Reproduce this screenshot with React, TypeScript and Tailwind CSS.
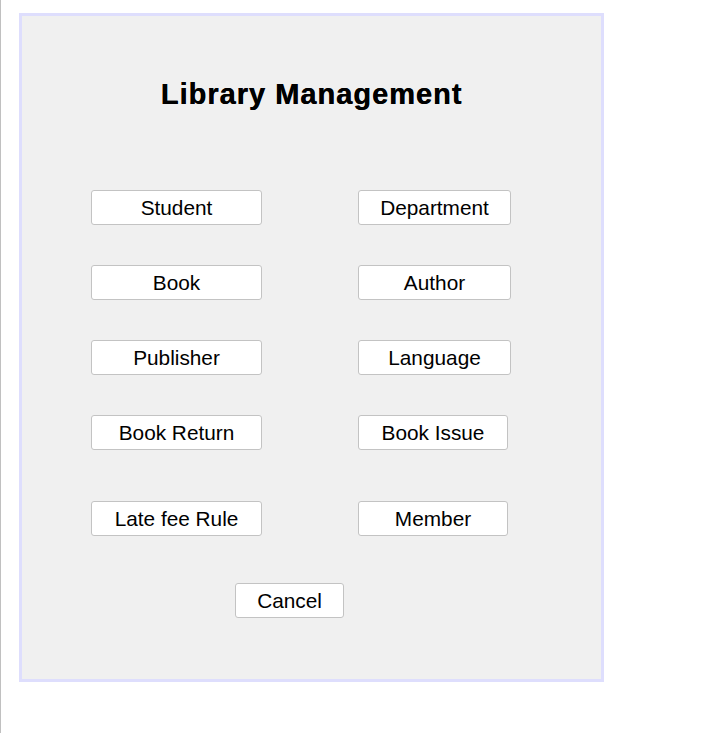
const rows = [
  { left: 'Student', right: 'Department', rightW: 'w-[153px]', mt: 'mt-[81px]' },
  { left: 'Book', right: 'Author', rightW: 'w-[153px]', mt: 'mt-[40px]' },
  { left: 'Publisher', right: 'Language', rightW: 'w-[153px]', mt: 'mt-[40px]' },
  { left: 'Book Return', right: 'Book Issue', rightW: 'w-[150px]', mt: 'mt-[40px]' },
  { left: 'Late fee Rule', right: 'Member', rightW: 'w-[150px]', mt: 'mt-[51px]' },
];

function Btn({ label, width }: { label: string; width: string }) {
  return (
    <button
      type="button"
      className={`${width} h-[35px] pt-[2px] flex items-center justify-center bg-white border border-[#c3c3c3] rounded-[3px] text-[20.8px] leading-none text-black`}
    >
      {label}
    </button>
  );
}

export default function App() {
  return (
    <div
      className="min-h-[733px] border-l border-[#c0c0c0] pl-[18px] pt-[13px] bg-white"
      style={{ fontFamily: '"Liberation Sans", Arial, sans-serif' }}
    >
      <div className="w-[585px] h-[669px] border-[3px] border-[#dedefd] bg-[#f0f0f0] flex flex-col">
        <h1 className="mt-[64px] text-center text-[29px] leading-none font-bold tracking-[1px] text-black [text-shadow:0.4px_0_0_#000]">
          Library Management
        </h1>

        {rows.map((row) => (
          <div key={row.left} className={`${row.mt} flex pl-[69px]`}>
            <div className="w-[267px]">
              <Btn label={row.left} width="w-[171px]" />
            </div>
            <Btn label={row.right} width={row.rightW} />
          </div>
        ))}

        <div className="mt-[47px] pl-[213px]">
          <Btn label="Cancel" width="w-[109px]" />
        </div>
      </div>
    </div>
  );
}
